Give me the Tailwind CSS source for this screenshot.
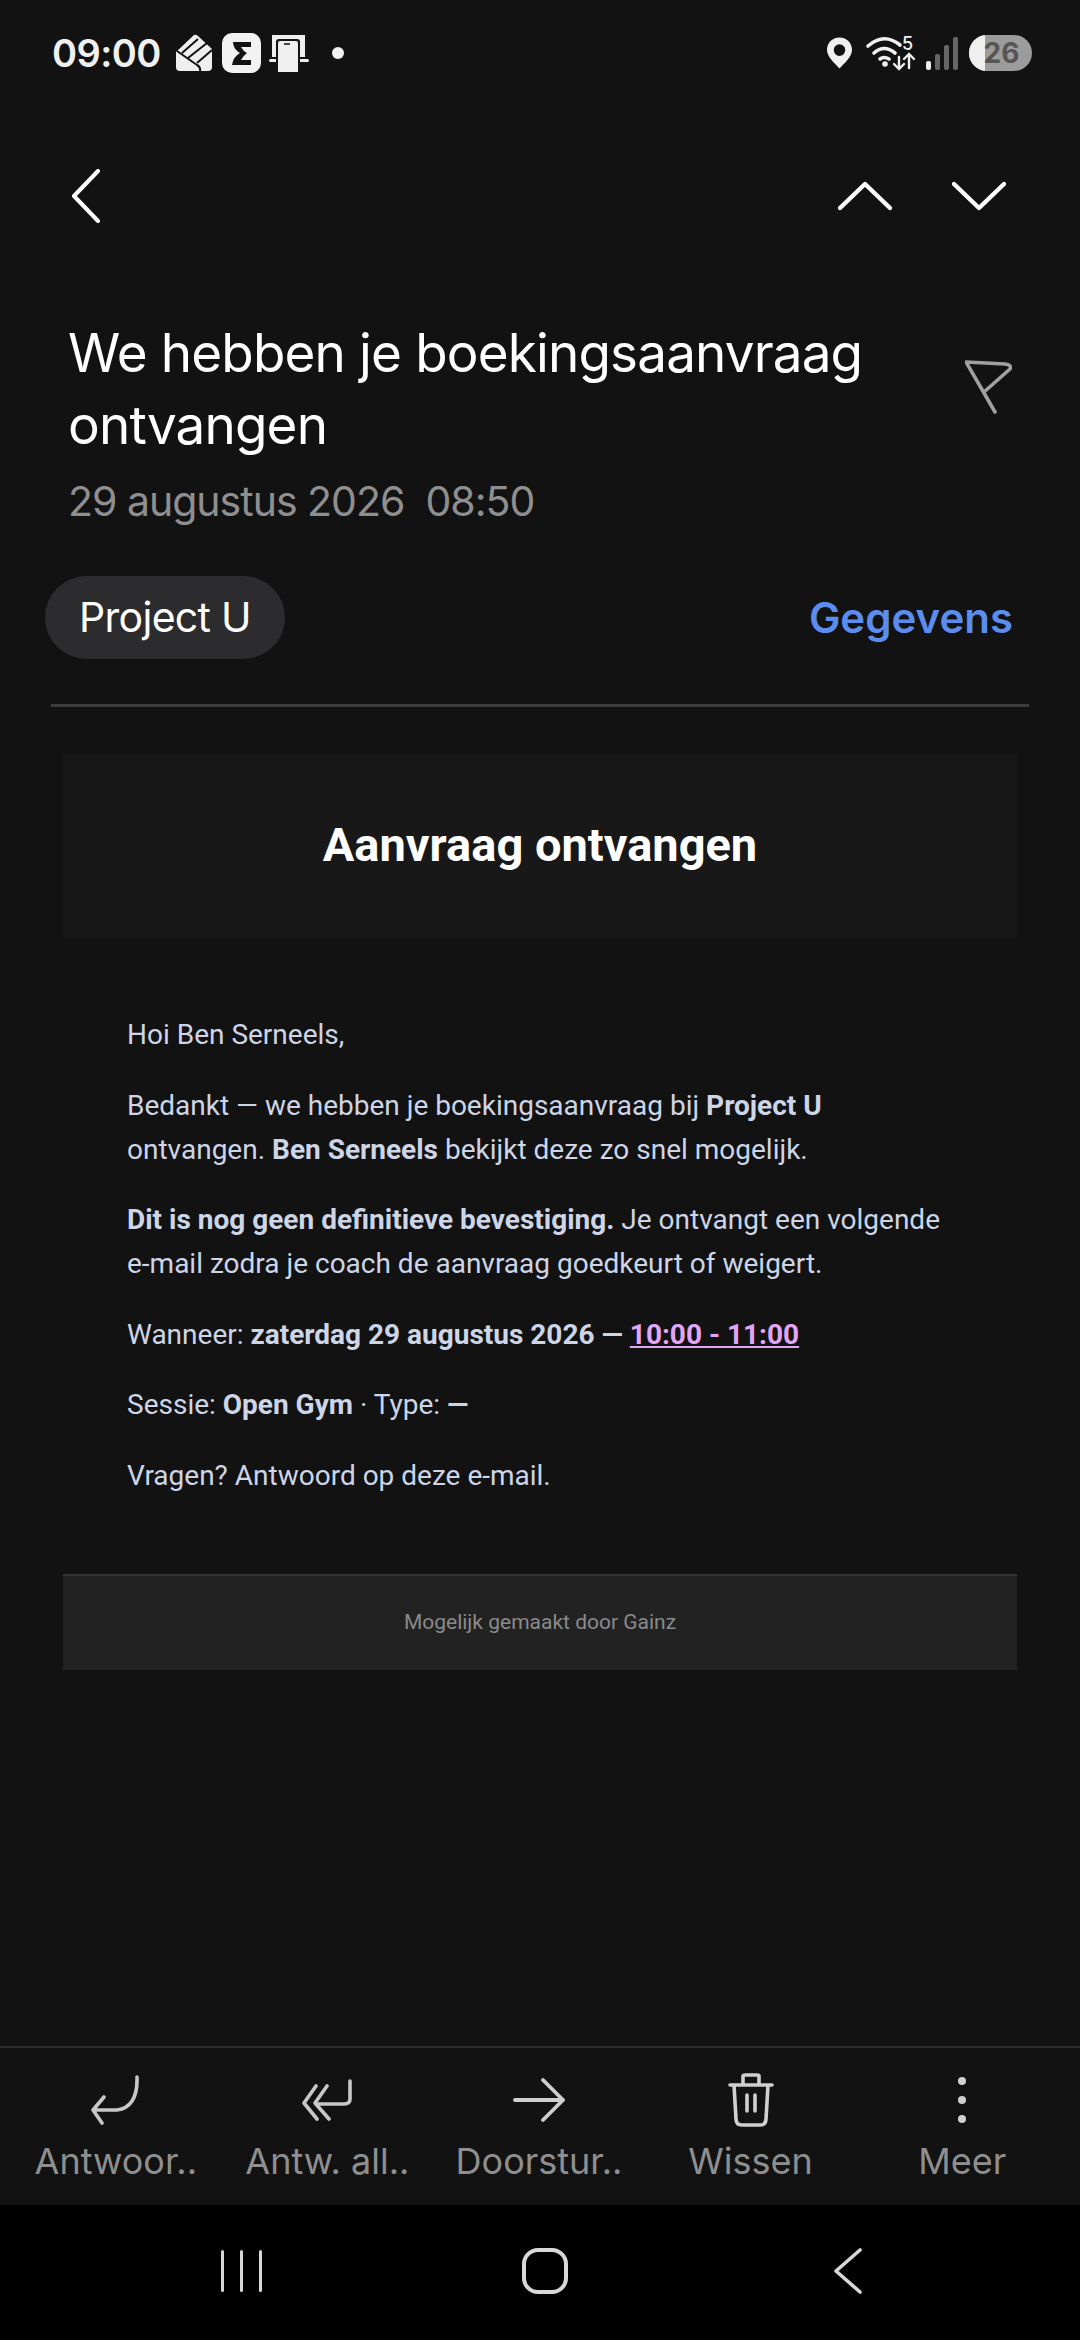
<!DOCTYPE html>
<html lang="nl">
<head>
    <meta charset="UTF-8">
    <meta name="viewport" content="width=device-width, initial-scale=1.0">
    <title>Aanvraag ontvangen</title>
    <script src="https://cdn.jsdelivr.net/npm/@tailwindcss/browser@4"></script>
</head>
<body class="bg-[#121212]">
<div class="w-[1080px] h-[2340px] flex flex-col overflow-hidden font-['Inter',sans-serif]">

    <!-- Status bar -->
    <div class="h-[105px] shrink-0 pl-[52px] pr-[48px] flex items-center justify-between text-[#f0f0f0]">
        <div class="flex items-center">
            <span class="text-[38px] font-semibold tracking-[-0.6px] leading-none w-[124px]">09:00</span>
            <svg width="37" height="38" viewBox="0 0 37 38" class="mr-[9px]" fill="none">
                <path d="M0 18 L18 1 Q20 0 22 2 L36 15 V33 Q36 37 32 37 H4 Q0 37 0 33Z" fill="#efefef"/>
                <path d="M1 17 L21 31 Q25 33 24 38 M6 19 L22 5 M12 24 L31 9 M21 29 L36 16" stroke="#121212" stroke-width="2"/>
            </svg>
            <svg width="39" height="40" viewBox="0 0 39 40" class="mr-[8px]">
                <rect width="39" height="40" rx="10" fill="#f2f2f2"/>
                <path d="M11 9 H29 V14 H19 Q21 18 25 20 Q21 23 19 27 H29 V32 H10 Q11 24 18 20 Q11 16 11 9Z" fill="#121212"/>
            </svg>
            <svg width="40" height="38" viewBox="0 0 40 38" fill="none" class="mr-[23px]">
                <rect x="3" y="1" width="33" height="22" fill="#efefef"/>
                <rect x="0" y="25" width="40" height="3" rx="1.5" fill="#efefef"/>
                <path d="M7 23 V8 Q7 5 10 5 H28 Q31 5 31 8 V30 H7Z" fill="#121212"/>
                <path d="M9 38 V9 Q9 7 11 7 H27 Q29 7 29 9 V38Z" fill="#efefef"/>
                <rect x="15" y="9" width="6" height="2" fill="#444"/>
            </svg>
            <span class="w-[12px] h-[12px] rounded-full bg-[#f2f2f2]"></span>
        </div>
        <div class="flex items-center">
            <svg width="25" height="32" viewBox="0 0 26 32" class="mr-[14px]">
                <path fill-rule="evenodd" d="M13 0 C5 0 0 6 0 13 C0 20 8 27 13 32 C18 27 26 20 26 13 C26 6 21 0 13 0Z M13 7 A6 6 0 1 1 13 19 A6 6 0 1 1 13 7Z" fill="#f0f0f0"/>
            </svg>
            <svg width="50" height="36" viewBox="0 0 50 36" fill="none" class="mr-[10px] overflow-visible" stroke="#f0f0f0" stroke-width="3.6" stroke-linecap="round">
                <path d="M2 11 Q18 -3 34 10"/>
                <path d="M8 18 Q18 9 29 18"/>
                <path d="M14 24 Q18 21 23 24"/>
                <circle cx="19" cy="29" r="2.8" fill="#f0f0f0" stroke="none"/>
                <path d="M33 22 V34 M28 29 L33 34 L38 29" stroke-width="2.4"/>
                <path d="M43 33 V19 M38 24 L43 19 L48 24" stroke-width="2.4"/>
                <text x="36" y="15" font-family="Inter" font-size="18" font-weight="500" fill="#f0f0f0" stroke="none">5</text>
            </svg>
            <div class="flex items-end gap-[4px] h-[34px] mr-[11px]">
                <span class="w-[5px] h-[9px] rounded-[2px] bg-[#f0f0f0]"></span>
                <span class="w-[5px] h-[16px] rounded-[2px] bg-[#666]"></span>
                <span class="w-[5px] h-[25px] rounded-[2px] bg-[#666]"></span>
                <span class="w-[5px] h-[33px] rounded-[2px] bg-[#666]"></span>
            </div>
            <div class="relative w-[63px] h-[36px] rounded-full overflow-hidden bg-[#9c9c9c] flex items-center justify-center">
                <span class="absolute left-0 top-0 bottom-0 w-[16px] bg-[#efefef]"></span>
                <span class="relative text-[28px] font-bold leading-none text-[#555] pl-[2px]">26</span>
            </div>
        </div>
    </div>

    <!-- Nav -->
    <div class="mt-[46px] h-[90px] shrink-0 pl-[71px] pr-[74px] flex items-center justify-between">
        <svg width="30" height="54" viewBox="0 0 30 54" fill="none" stroke="#fff" stroke-width="4" stroke-linecap="round" stroke-linejoin="round">
            <path d="M27 2 L3 27 L27 52"/>
        </svg>
        <div class="flex items-center gap-[60px]">
            <svg width="54" height="30" viewBox="0 0 54 30" fill="none" stroke="#fff" stroke-width="4.4" stroke-linecap="round" stroke-linejoin="round">
                <path d="M2 27 L27 3 L52 27"/>
            </svg>
            <svg width="54" height="30" viewBox="0 0 54 30" fill="none" stroke="#fff" stroke-width="4.4" stroke-linecap="round" stroke-linejoin="round">
                <path d="M2 3 L27 27 L52 3"/>
            </svg>
        </div>
    </div>

    <!-- Subject -->
    <div class="pl-[68px] pr-[68px] pt-[76px] flex items-start justify-between">
        <div class="w-[840px]">
            <h1 class="text-[53px] leading-[72px] text-white font-normal tracking-[-0.85px]">We hebben je boekingsaanvraag ontvangen</h1>
            <p class="text-[41px] leading-[56px] text-[#8f8f8f] mt-[12px] whitespace-pre tracking-[-1px]">29 augustus 2026  08:50</p>
        </div>
        <svg width="47" height="54" viewBox="0 0 47 54" fill="none" stroke="#a0a0a0" stroke-width="3.6" stroke-linecap="round" stroke-linejoin="round" class="mt-[43px]">
            <path d="M30 52 L1 2 L40 4 Q47 5 45 9 L19 32"/>
        </svg>
    </div>

    <!-- Sender row -->
    <div class="mt-[47px] pl-[45px] pr-[67px] flex items-center justify-between">
        <span class="h-[83px] px-[34px] rounded-full bg-[#2c2c2e] flex items-center text-[41px] text-white tracking-[-0.7px]">Project U</span>
        <span class="text-[42px] font-semibold text-[#5b8def]">Gegevens</span>
    </div>
    <div class="mt-[45px] mx-[51px] h-[3px] bg-[#3c3c3c]"></div>

    <!-- Mail body -->
    <div class="mt-[47px] mx-[63px] font-['Roboto',sans-serif]">
        <div class="h-[184px] pb-[2px] bg-[#181818] flex items-center justify-center">
            <h2 class="text-[47px] font-bold text-white">Aanvraag ontvangen</h2>
        </div>
        <div class="pt-[75px] pl-[64px] pr-[64px] text-[28px] leading-[44px] text-[#cdd5e6] flex flex-col gap-[26.6px]">
            <p>Hoi Ben Serneels,</p>
            <p>Bedankt — we hebben je boekingsaanvraag bij <b class="font-bold">Project U</b> ontvangen. <b class="font-bold">Ben Serneels</b> bekijkt deze zo snel mogelijk.</p>
            <p><b class="font-bold">Dit is nog geen definitieve bevestiging.</b> Je ontvangt een volgende e-mail zodra je coach de aanvraag goedkeurt of weigert.</p>
            <p>Wanneer: <b class="font-bold">zaterdag 29 augustus 2026 — <span class="underline text-[#e3a6f7]">10:00 - 11:00</span></b></p>
            <p>Sessie: <b class="font-bold">Open Gym</b> · Type: <b class="font-bold">—</b></p>
            <p>Vragen? Antwoord op deze e-mail.</p>
        </div>
        <div class="mt-[76px] h-[96px] bg-[#222222] border-t-2 border-[#333333] flex items-center justify-center text-[21px] text-[#8a8a8a]">Mogelijk gemaakt door Gainz</div>
    </div>

    <div class="flex-1"></div>

    <!-- Actions -->
    <div class="h-[159px] shrink-0 border-t-2 border-[#2e2e2e] grid grid-cols-5 pl-[10px] pr-[12px] text-[36px] text-[#8f8f8f]">
        <div class="flex flex-col items-center">
            <svg width="50" height="50" viewBox="0 0 50 50" fill="none" stroke="#c8c8c8" stroke-width="3.6" stroke-linecap="round" stroke-linejoin="round" class="mt-[27px]">
                <path d="M46 2 Q47 32 26 35 H3 M13 22 L2 35 L11 48"/>
            </svg>
            <span class="mt-[12px] leading-[48px]">Antwoor..</span>
        </div>
        <div class="flex flex-col items-center">
            <svg width="50" height="50" viewBox="0 0 50 50" fill="none" stroke="#c8c8c8" stroke-width="3.6" stroke-linecap="round" stroke-linejoin="round" class="mt-[27px]">
                <path d="M48 6 V24 Q48 29 42 29 H14 M25 11 L13 28 L27 44 M14 11 L2 28 L15 44"/>
            </svg>
            <span class="mt-[12px] leading-[48px]">Antw. all..</span>
        </div>
        <div class="flex flex-col items-center">
            <svg width="52" height="50" viewBox="0 0 52 50" fill="none" stroke="#d0d0d0" stroke-width="3.8" stroke-linecap="round" stroke-linejoin="round" class="mt-[27px]">
                <path d="M2 25 H50 M30 5 L50 25 L30 45"/>
            </svg>
            <span class="mt-[12px] leading-[48px]">Doorstur..</span>
        </div>
        <div class="flex flex-col items-center">
            <svg width="46" height="54" viewBox="0 0 46 54" fill="none" stroke="#d0d0d0" stroke-width="3.6" stroke-linecap="round" stroke-linejoin="round" class="mt-[25px] mb-[-2px]">
                <path d="M2 12 H44 M15 12 V3 Q15 2 17 2 H29 Q31 2 31 3 V12 M6 12 L8 46 Q8 52 14 52 H32 Q38 52 38 46 L40 12 M19 22 V38 M27 22 V38"/>
            </svg>
            <span class="mt-[12px] leading-[48px]">Wissen</span>
        </div>
        <div class="flex flex-col items-center">
            <div class="mt-[29px] h-[46px] flex flex-col justify-between">
                <span class="block w-[8px] h-[8px] rounded-full bg-[#d0d0d0]"></span>
                <span class="block w-[8px] h-[8px] rounded-full bg-[#d0d0d0]"></span>
                <span class="block w-[8px] h-[8px] rounded-full bg-[#d0d0d0]"></span>
            </div>
            <span class="mt-[14px] leading-[48px]">Meer</span>
        </div>
    </div>

    <!-- Android nav -->
    <div class="h-[135px] shrink-0 bg-black relative flex items-center justify-between pl-[221px] pr-[218px]">
        <div class="flex gap-[16px] h-[42px] -mt-[4px]">
            <span class="w-[3px] h-full bg-[#d8d8d8] rounded-full"></span>
            <span class="w-[3px] h-full bg-[#d8d8d8] rounded-full"></span>
            <span class="w-[3px] h-full bg-[#d8d8d8] rounded-full"></span>
        </div>
        <span class="w-[46px] h-[46px] -mt-[4px] -ml-[6px] rounded-[16px] border-[4px] border-[#d8d8d8]"></span>
        <svg width="28" height="46" viewBox="0 0 28 46" fill="none" stroke="#d8d8d8" stroke-width="3.6" stroke-linecap="round" stroke-linejoin="round" class="-mt-[4px]">
            <path d="M26 2 L2 23 L26 44"/>
        </svg>
    </div>
</div>
</body>
</html>
